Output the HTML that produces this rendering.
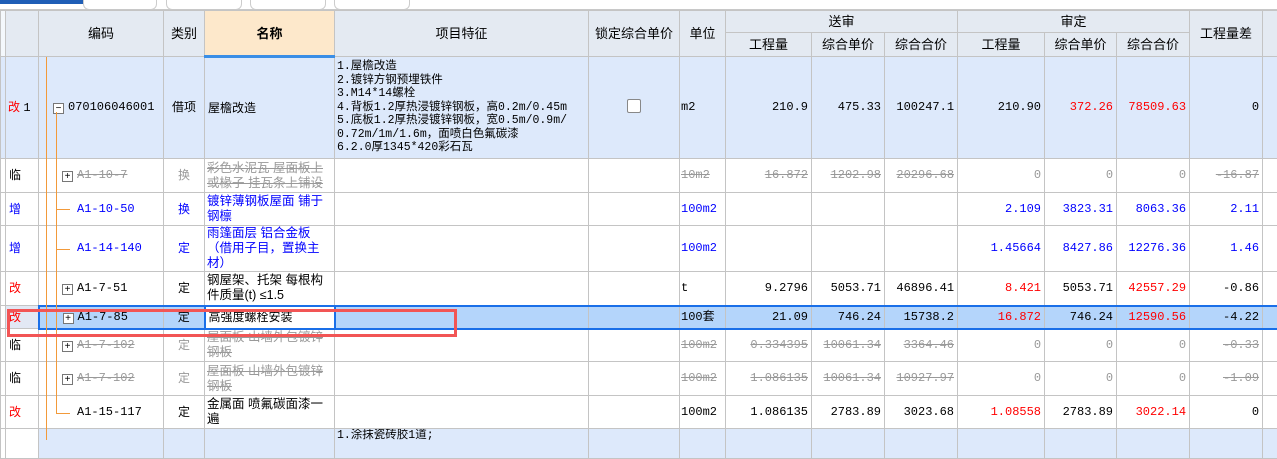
<!DOCTYPE html>
<html><head><meta charset="utf-8"><style>
body{margin:0;width:1277px;height:440px;overflow:hidden;background:#fff;font-family:"Liberation Mono","Noto Sans CJK SC",monospace;font-size:12px;color:#000;position:relative}
.tab{position:absolute;top:-6px;height:14px;border:1px solid #ccc;border-radius:0 0 6px 6px;background:#fff}
table{position:absolute;left:0;top:10px;border-collapse:collapse;table-layout:fixed;width:1290px}
td,th{border:1px solid #c4c4c4;padding:0 3px;overflow:hidden;white-space:nowrap;font-weight:normal;line-height:13px;font-family:"Liberation Sans","Noto Sans CJK SC",sans-serif}
th{background:#e4eaf2;font-size:13px;text-align:center}
th.nm{background:#fde8cb;font-weight:bold;border-bottom:3px solid #3a8ee6}
td.n{font-family:"Liberation Mono","Noto Sans CJK SC",monospace;text-align:right;font-size:12px}
td.c{text-align:center}
td.w{white-space:normal;line-height:15px;padding:0 2px;font-size:12.5px}
td.f{white-space:nowrap;line-height:13.5px;padding:0 2px;font-family:"Liberation Mono","Noto Sans CJK SC",monospace;font-size:11.5px}
.r{color:#f00}.b{color:#00f}.g{color:#999;text-decoration:line-through}
tr.h1 td{background:#dde9fb}
tr.sel td{background:#b4d5fb;border-top:2px solid #1a6fe8;border-bottom:2px solid #1a6fe8}
.code{padding-left:38px;font-family:"Liberation Mono","Noto Sans CJK SC",monospace}
.box{display:inline-block;width:9px;height:9px;border:1px solid #777;background:#fff;font-size:10px;line-height:9px;text-align:center;margin-right:4px;vertical-align:-1px;font-family:"Liberation Sans",sans-serif;color:#000}
.mono{font-family:"Liberation Mono","Noto Sans CJK SC",monospace}
</style></head><body>
<div style="position:absolute;left:0;top:0;width:85px;height:4px;background:#1f5eb6"></div>
<div class="tab" style="left:83px;width:72px"></div>
<div class="tab" style="left:166px;width:74px"></div>
<div class="tab" style="left:250px;width:74px"></div>
<div class="tab" style="left:334px;width:74px"></div>
<div style="position:absolute;left:0;top:9px;width:1277px;height:2px;background:#c8c8c8"></div>
<table>
<colgroup><col style="width:5px"><col style="width:33px"><col style="width:125px"><col style="width:41px"><col style="width:130px"><col style="width:254px"><col style="width:91px"><col style="width:46px"><col style="width:86px"><col style="width:73px"><col style="width:73px"><col style="width:87px"><col style="width:72px"><col style="width:73px"><col style="width:73px"><col style="width:28px"></colgroup>
<tr style="height:22px"><th rowspan="2" style="background:#f4f8fc"></th><th rowspan="2"></th><th rowspan="2">编码</th><th rowspan="2">类别</th><th rowspan="2" class="nm">名称</th><th rowspan="2">项目特征</th><th rowspan="2">锁定综合单价</th><th rowspan="2">单位</th><th colspan="3">送审</th><th colspan="3">审定</th><th rowspan="2">工程量差</th><th rowspan="2"></th></tr>
<tr style="height:24px"><th>工程量</th><th>综合单价</th><th>综合合价</th><th>工程量</th><th>综合单价</th><th>综合合价</th></tr>
<tr class="h1" style="height:102px"><td></td><td style="padding:0 2px"><span class="r">改</span> <span class="mono">1</span></td><td class="mono" style="padding-left:14px"><span class="box">−</span>070106046001</td><td class="c">借项</td><td>屋檐改造</td><td class="f">1.屋檐改造<br>2.镀锌方钢预埋铁件<br>3.M14*14螺栓<br>4.背板1.2厚热浸镀锌钢板，高0.2m/0.45m<br>5.底板1.2厚热浸镀锌钢板，宽0.5m/0.9m/<br>0.72m/1m/1.6m，面喷白色氟碳漆<br>6.2.0厚1345*420彩石瓦</td><td class="c"><span style="display:inline-block;width:12px;height:12px;border:1px solid #888;border-radius:2px;background:#fff"></span></td><td class="mono" style="padding:0 1px">m2</td><td class="n">210.9</td><td class="n">475.33</td><td class="n">100247.1</td><td class="n">210.90</td><td class="n r">372.26</td><td class="n r">78509.63</td><td class="n">0</td><td></td></tr>
<tr style="height:34px"><td></td><td>临</td><td class="code" style="padding-left:23px"><span class="box">+</span><span class="g">A1-10-7</span></td><td class="c" style="color:#999">换</td><td class="w g">彩色水泥瓦 屋面板上或椽子 挂瓦条上铺设</td><td></td><td></td><td class="g mono" style="padding:0 1px">10m2</td><td class="n g">16.872</td><td class="n g">1202.98</td><td class="n g">20296.68</td><td class="n" style="color:#999">0</td><td class="n" style="color:#999">0</td><td class="n" style="color:#999">0</td><td class="n g">-16.87</td><td></td></tr>
<tr style="height:33px"><td></td><td class="b">增</td><td class="code b">A1-10-50</td><td class="c b">换</td><td class="w b">镀锌薄钢板屋面 铺于钢檩</td><td></td><td></td><td class="b mono" style="padding:0 1px">100m2</td><td></td><td></td><td></td><td class="n b">2.109</td><td class="n b">3823.31</td><td class="n b">8063.36</td><td class="n b">2.11</td><td></td></tr>
<tr style="height:46px"><td></td><td class="b">增</td><td class="code b">A1-14-140</td><td class="c b">定</td><td class="w b">雨篷面层 铝合金板（借用子目，置换主材）</td><td></td><td></td><td class="b mono" style="padding:0 1px">100m2</td><td></td><td></td><td></td><td class="n b">1.45664</td><td class="n b">8427.86</td><td class="n b">12276.36</td><td class="n b">1.46</td><td></td></tr>
<tr style="height:34px"><td></td><td class="r">改</td><td class="code" style="padding-left:23px"><span class="box">+</span>A1-7-51</td><td class="c">定</td><td class="w">钢屋架、托架 每根构件质量(t) ≤1.5</td><td></td><td></td><td class="mono" style="padding:0 1px">t</td><td class="n">9.2796</td><td class="n">5053.71</td><td class="n">46896.41</td><td class="n r">8.421</td><td class="n">5053.71</td><td class="n r">42557.29</td><td class="n">-0.86</td><td></td></tr>
<tr class="sel" style="height:23px"><td style="background:#fff;border-top:1px solid #c4c4c4;border-bottom:1px solid #c4c4c4"></td><td class="r" style="background:#e2e8f4;border-top:1px solid #c4c4c4;border-bottom:1px solid #c4c4c4">改</td><td class="code" style="padding-left:23px;border-left:2px solid #1a6fe8"><span class="box">+</span>A1-7-85</td><td class="c">定</td><td style="background:#fff;border:2px solid #1a6fe8">高强度螺栓安装</td><td></td><td></td><td class="mono" style="padding:0 1px">100套</td><td class="n">21.09</td><td class="n">746.24</td><td class="n">15738.2</td><td class="n r">16.872</td><td class="n">746.24</td><td class="n r">12590.56</td><td class="n">-4.22</td><td></td></tr>
<tr style="height:33px"><td></td><td>临</td><td class="code" style="padding-left:23px"><span class="box">+</span><span class="g">A1-7-102</span></td><td class="c" style="color:#999">定</td><td class="w g">屋面板 山墙外包镀锌钢板</td><td></td><td></td><td class="g mono" style="padding:0 1px">100m2</td><td class="n g">0.334395</td><td class="n g">10061.34</td><td class="n g">3364.46</td><td class="n" style="color:#999">0</td><td class="n" style="color:#999">0</td><td class="n" style="color:#999">0</td><td class="n g">-0.33</td><td></td></tr>
<tr style="height:34px"><td></td><td>临</td><td class="code" style="padding-left:23px"><span class="box">+</span><span class="g">A1-7-102</span></td><td class="c" style="color:#999">定</td><td class="w g">屋面板 山墙外包镀锌钢板</td><td></td><td></td><td class="g mono" style="padding:0 1px">100m2</td><td class="n g">1.086135</td><td class="n g">10061.34</td><td class="n g">10927.97</td><td class="n" style="color:#999">0</td><td class="n" style="color:#999">0</td><td class="n" style="color:#999">0</td><td class="n g">-1.09</td><td></td></tr>
<tr style="height:33px"><td></td><td class="r">改</td><td class="code">A1-15-117</td><td class="c">定</td><td class="w">金属面 喷氟碳面漆一遍</td><td></td><td></td><td class="mono" style="padding:0 1px">100m2</td><td class="n">1.086135</td><td class="n">2783.89</td><td class="n">3023.68</td><td class="n r">1.08558</td><td class="n">2783.89</td><td class="n r">3022.14</td><td class="n">0</td><td></td></tr>
<tr class="h1" style="height:30px"><td style="background:#fff"></td><td style="background:#fff"></td><td></td><td></td><td></td><td class="f" style="vertical-align:top">1.涂抹瓷砖胶1道;</td><td></td><td></td><td></td><td></td><td></td><td></td><td></td><td></td><td></td><td></td></tr>
</table>
<div style="position:absolute;left:46px;top:57px;width:1px;height:383px;background:#f29a3a"></div>
<div style="position:absolute;left:56px;top:112px;width:1px;height:302px;background:#f29a3a"></div>
<div style="position:absolute;left:56px;top:209px;width:14px;height:1px;background:#f29a3a"></div>
<div style="position:absolute;left:56px;top:249px;width:14px;height:1px;background:#f29a3a"></div>
<div style="position:absolute;left:56px;top:413px;width:14px;height:1px;background:#f29a3a"></div>
<div style="position:absolute;left:7px;top:309px;width:444px;height:22px;border:3px solid #f25555"></div>
</body></html>
